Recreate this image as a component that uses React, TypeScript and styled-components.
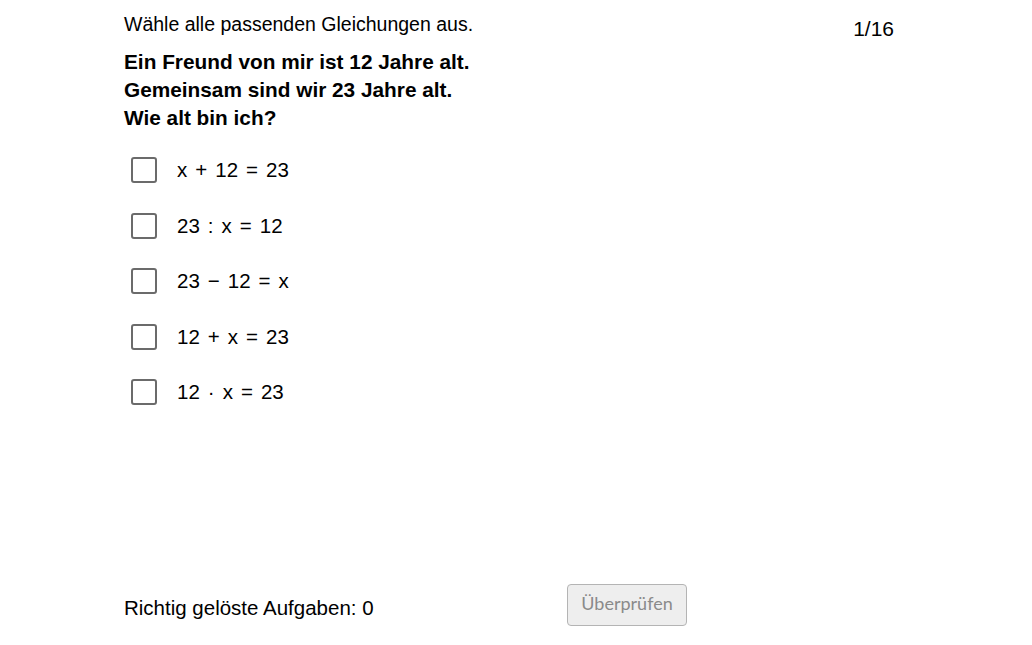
import * as React from 'react';
import styled, { createGlobalStyle } from 'styled-components';

const GlobalStyle = createGlobalStyle`
  html, body {
    margin: 0;
    padding: 0;
    background: #ffffff;
  }
  body {
    font-family: 'Liberation Sans', Arial, sans-serif;
    color: #000000;
  }
`;

const Page = styled.div`
  height: 645px;
  box-sizing: border-box;
  padding: 12px 0 19px 124px;
  display: flex;
  flex-direction: column;
`;

const Header = styled.div`
  width: 770px;
  display: flex;
  justify-content: space-between;
  align-items: flex-start;
  font-size: 19.5px;
  line-height: 24px;
`;

const Counter = styled.span`
  margin-top: 5px;
  font-size: 21px;
`;

const Question = styled.div`
  margin-top: 7px;
  font-size: 20.8px;
  font-weight: bold;
  line-height: 28px;
`;

const Options = styled.div`
  margin-top: 25px;
  display: flex;
  flex-direction: column;
  gap: 29.6px;
`;

const Option = styled.label`
  display: flex;
  align-items: center;
  height: 26px;
  padding-left: 7px;
  font-size: 20.5px;
  cursor: pointer;
`;

const Box = styled.span`
  width: 26px;
  height: 26px;
  box-sizing: border-box;
  border: 2px solid #6b6b6b;
  border-radius: 3px;
  background: #ffffff;
  margin-right: 20px;
`;

const Op = styled.span`
  margin: 0 8px;
`;

const Footer = styled.div`
  margin-top: auto;
  display: grid;
  grid-template-columns: 443px auto;
  align-items: center;
`;

const Solved = styled.span`
  font-size: 20.5px;
  padding-top: 6px;
`;

const CheckButton = styled.button`
  width: 120px;
  height: 42px;
  border: 1px solid #b4b4b4;
  border-radius: 4px;
  background: #eeeeee;
  color: #8a8a8a;
  font-family: Lato, sans-serif;
  font-size: 18px;
  padding: 0 0 4px;
`;

const equations: string[][] = [
  ['x', '+', '12', '=', '23'],
  ['23', ':', 'x', '=', '12'],
  ['23', '−', '12', '=', 'x'],
  ['12', '+', 'x', '=', '23'],
  ['12', '·', 'x', '=', '23'],
];

const isOp = (t: string) => ['+', ':', '−', '=', '·'].includes(t);

export default function App() {
  return (
    <>
      <GlobalStyle />
      <Page>
        <Header>
          <span>Wähle alle passenden Gleichungen aus.</span>
          <Counter>1/16</Counter>
        </Header>
        <Question>
          Ein Freund von mir ist 12 Jahre alt.
          <br />
          Gemeinsam sind wir 23 Jahre alt.
          <br />
          Wie alt bin ich?
        </Question>
        <Options>
          {equations.map((eq, i) => (
            <Option key={i}>
              <Box />
              {eq.map((t, j) => (isOp(t) ? <Op key={j}>{t}</Op> : <span key={j}>{t}</span>))}
            </Option>
          ))}
        </Options>
        <Footer>
          <Solved>Richtig gelöste Aufgaben: 0</Solved>
          <CheckButton disabled>Überprüfen</CheckButton>
        </Footer>
      </Page>
    </>
  );
}
